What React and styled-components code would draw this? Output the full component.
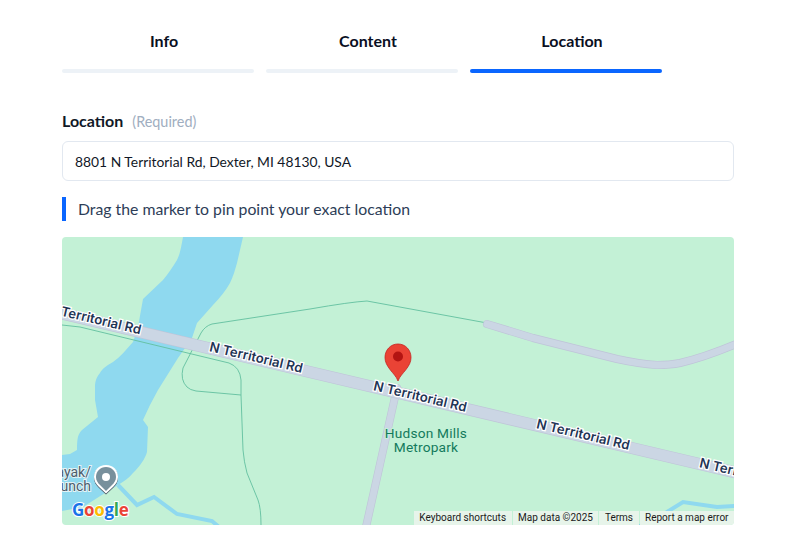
import React from 'react';
import styled, { createGlobalStyle } from 'styled-components';

const GlobalStyle = createGlobalStyle`
	body {
		margin: 0;
		background: #fff;
		font-family: 'Lato', 'Liberation Sans', sans-serif;
	}
`;

const Page = styled.main`
	width: 672px;
	padding: 0 0 23px 62px;
`;

const Tabs = styled.nav`
	display: grid;
	grid-template-columns: repeat(3, 204px);
`;

const Tab = styled.div`
	font-size: 16px;
	font-weight: 700;
	line-height: 20px;
	color: #0a0f1f;
	text-align: center;
	padding-top: 31px;

	&::after {
		content: '';
		display: block;
		height: 4px;
		margin: 18px 12px 0 0;
		border-radius: 2px;
		background: ${(props) => (props.$active ? '#0a66ff' : '#edf2f7')};
	}
`;

const Label = styled.div`
	margin-top: 38px;
	display: flex;
	align-items: baseline;
	gap: 9px;
	line-height: 20px;
	font-size: 16px;
	font-weight: 700;
	color: #111827;
`;

const Required = styled.span`
	font-size: 14.4px;
	font-weight: 400;
	color: #a0aec0;
`;

const AddressInput = styled.div`
	margin-top: 9px;
	height: 38px;
	padding: 0 12px;
	display: flex;
	align-items: center;
	border: 1px solid #e2e8f0;
	border-radius: 6px;
	font-size: 13.85px;
	color: #111827;
`;

const Note = styled.p`
	box-sizing: border-box;
	margin: 16px 0;
	height: 24px;
	padding: 0 0 2px 12px;
	display: flex;
	align-items: center;
	border-left: 4px solid #0a66ff;
	font-size: 15.8px;
	color: #2d3d57;
`;

const MapBox = styled.div`
	position: relative;
	height: 288px;
	border-radius: 4px;
	overflow: hidden;
	background: #c3f1d6;

	svg {
		display: block;
	}
`;

const Attribution = styled.div`
	position: absolute;
	right: 0;
	bottom: 0;
	display: flex;
	gap: 1px;
`;

const AttributionItem = styled.span`
	height: 14px;
	padding: 0 5.5px;
	background: #e7f4ea;
	font-family: 'Roboto', sans-serif;
	font-size: 10px;
	line-height: 14px;
	color: #1a1a1a;
	white-space: nowrap;
`;

const RoadLabel = styled.text`
	font-family: 'Inter', 'Roboto', sans-serif;
	font-size: 13.2px;
	font-weight: 600;
	fill: #1f3555;
	stroke: #fff;
	stroke-width: 2.5px;
	paint-order: stroke;
	text-anchor: middle;
`;

const ParkLabel = styled.text`
	font-family: 'Roboto', sans-serif;
	font-size: 13.7px;
	letter-spacing: 0.2px;
	fill: #137a5c;
	stroke: #c3f1d6;
	stroke-width: 2px;
	paint-order: stroke;
	text-anchor: middle;
`;

const PoiLabel = styled.text`
	font-family: 'Roboto', sans-serif;
	font-size: 14px;
	fill: #4c5d6c;
	stroke: #e4f3f6;
	stroke-width: 2px;
	paint-order: stroke;
	text-anchor: end;
`;

const GoogleLogo = styled.text`
	font-family: 'Open Sans', sans-serif;
	font-size: 17px;
	font-weight: 700;
	letter-spacing: -0.3px;
	stroke: #fff;
	stroke-width: 2px;
	paint-order: stroke;
`;

const roadLabels = [
	{ text: 'Territorial Rd', x: 101, y: 321 },
	{ text: 'N Territorial Rd', x: 256, y: 358 },
	{ text: 'N Territorial Rd', x: 420, y: 397 },
	{ text: 'N Territorial Rd', x: 583, y: 435 },
	{ text: 'N Territorial Rd', x: 746, y: 474 },
];

const googleLetters = [
	{ ch: 'G', fill: '#1a73e8' },
	{ ch: 'o', fill: '#ea4335' },
	{ ch: 'o', fill: '#fbbc04' },
	{ ch: 'g', fill: '#1a73e8' },
	{ ch: 'l', fill: '#34a853' },
	{ ch: 'e', fill: '#ea4335' },
];

const attribution = ['Keyboard shortcuts', 'Map data ©2025', 'Terms', 'Report a map error'];

const poiOutline =
	'M106 465 C98.500 465 94 470.500 94 477 C94 481 96 484 99 487 L106 493.500 L113 487 C116 484 118 481 118 477 C118 470.500 113.500 465 106 465 Z';

const MapDrawing = () => (
	<svg width="672" height="288" viewBox="62 237 672 288">
		{/* river */}
		<path
			fill="#8fd9ef"
			d="M183 237 C181 248 180 254 177 260 C172 268 168 274 163 280 L143 299 L138 327 L133 342 C126 350 120 357 113 362 C106 366 102 369 100 373 C96 378 95 382 95 387 L95 400 L98 417 L82 430 C78 434 77 438 77 450 L70 454 L62 455 L62 511 L83 507 L105 493 L118 485 C124 481 129 478 133 473 C140 466 145 459 147 452 L148 427 L143 420 L150 405 L158 390 L178 358 L192 338 L197 323 L213 305 C220 298 226 290 230 283 C233 277 235 270 237 263 L243 237 Z"
		/>
		<g fill="none" stroke="#8fd9ef" strokeWidth="4">
			<path d="M118 485 L137 505 L154 497 L177 514 L212 521 L219 527" />
			<path d="M638 527 L667 512 L683 502 L717 507 L736 506" />
		</g>
		{/* trails */}
		<g fill="none" stroke="#62bf9f" strokeWidth="0.9">
			<path d="M487 323 L367 301 Q350 302 310 309 L212 324 Q205 326 201 333 L183 368 Q180 380 187 387 Q190 390 196 391 L241 395" />
			<path d="M62 325 L80 327 L229 363 Q240 367 241 380 L241 395 L243 450 Q244 462 247 473 L258 500 Q261 508 261 525" />
		</g>
		{/* roads */}
		<g fill="none" strokeLinecap="round" strokeLinejoin="round">
			<path stroke="#bfc4d8" strokeWidth="8" d="M397 388 L366 527" />
			<path stroke="#cbd6e4" strokeWidth="6.8" d="M397 388 L366 527" />
			<path stroke="#bfc4d8" strokeWidth="8" d="M487 324 L533 338 L617 359 Q640 364 657 365 Q670 365 680 363 Q705 357 736 344" />
			<path stroke="#cbd6e4" strokeWidth="6.8" d="M487 324 L533 338 L617 359 Q640 364 657 365 Q670 365 680 363 Q705 357 736 344" />
			<path stroke="#bfc4d8" strokeWidth="12" d="M50 310.700 L746 475" />
			<path stroke="#cbd6e4" strokeWidth="10.800" d="M50 310.700 L746 475" />
		</g>
		{roadLabels.map((label, i) => (
			<RoadLabel
				key={i}
				x={label.x}
				y={label.y + 4}
				transform={`rotate(13.300 ${label.x} ${label.y})`}
			>
				{label.text}
			</RoadLabel>
		))}
		<ParkLabel x="426" y="438">Hudson Mills</ParkLabel>
		<ParkLabel x="426" y="452">Metropark</ParkLabel>
		{/* kayak launch poi */}
		<PoiLabel x="91" y="477">Kayak/</PoiLabel>
		<PoiLabel x="91" y="491">Launch</PoiLabel>
		<path fill="#46525e" transform="translate(0 1)" d={poiOutline} />
		<path fill="#fff" d={poiOutline} />
		<path
			fill="#78909c"
			d="M106 467 C100 467 96 471.500 96 477 C96 480.500 98 483 100 485 L106 491 L112 485 C114 483 116 480.500 116 477 C116 471.500 112 467 106 467 Z"
		/>
		<circle cx="106" cy="477" r="4" fill="#fff" />
		{/* marker */}
		<path
			fill="#ea4335"
			stroke="#c5221f"
			strokeWidth="0.8"
			d="M398 344 C390.500 344 385 350 385 357.500 C385 362 387 365.500 390 369.500 C393 373.500 396.500 376.500 398 381 C399.500 376.500 403 373.500 406 369.500 C409 365.500 411 362 411 357.500 C411 350 405.500 344 398 344 Z"
		/>
		<circle cx="398" cy="356.500" r="5" fill="#b31412" />
		<GoogleLogo x="72" y="516">
			{googleLetters.map((letter, i) => (
				<tspan key={i} fill={letter.fill}>{letter.ch}</tspan>
			))}
		</GoogleLogo>
	</svg>
);

export default function App() {
	return (
		<Page>
			<GlobalStyle />
			<Tabs>
				<Tab>Info</Tab>
				<Tab>Content</Tab>
				<Tab $active>Location</Tab>
			</Tabs>
			<Label>
				Location <Required>(Required)</Required>
			</Label>
			<AddressInput>8801 N Territorial Rd, Dexter, MI 48130, USA</AddressInput>
			<Note>Drag the marker to pin point your exact location</Note>
			<MapBox>
				<MapDrawing />
				<Attribution>
					{attribution.map((item) => (
						<AttributionItem key={item}>{item}</AttributionItem>
					))}
				</Attribution>
			</MapBox>
		</Page>
	);
}
